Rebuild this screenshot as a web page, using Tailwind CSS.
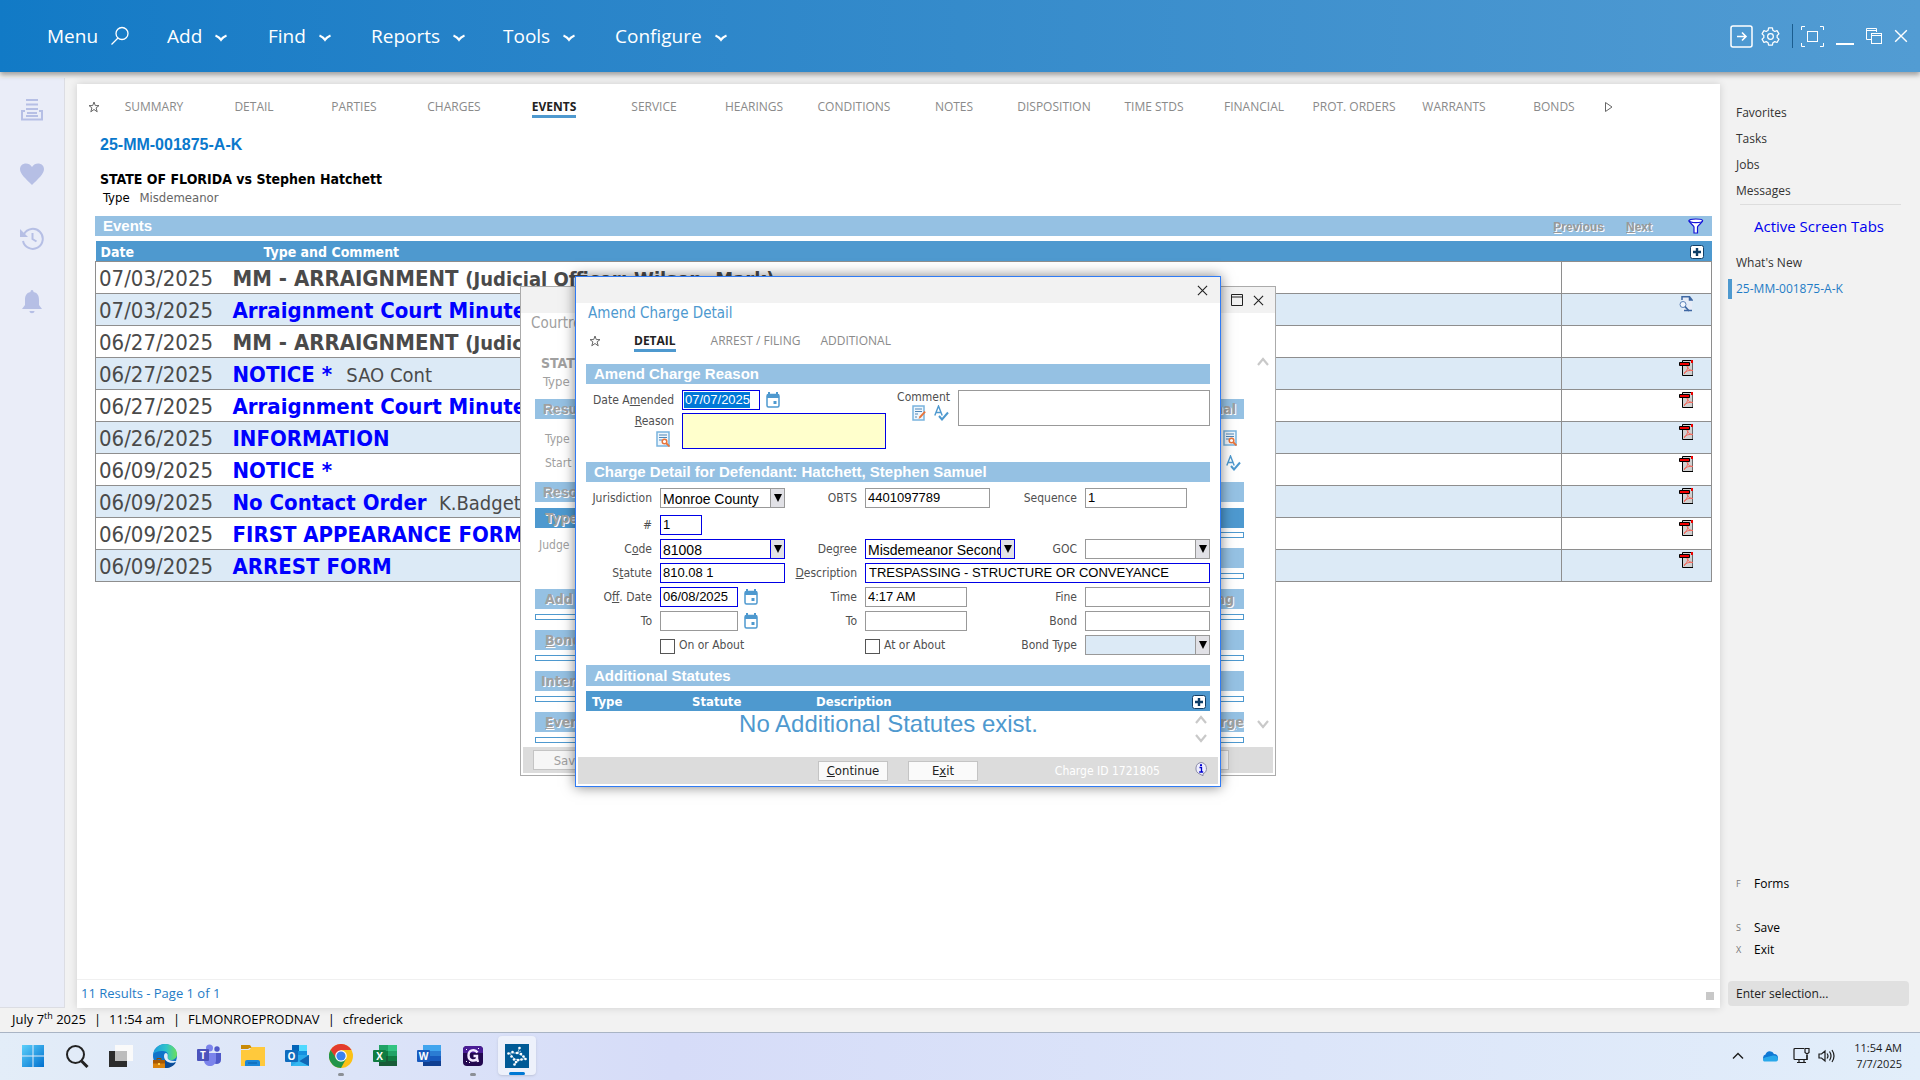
<!DOCTYPE html>
<html lang="en">
<head>
    <meta charset="UTF-8">
    <meta name="viewport" content="width=device-width, initial-scale=1.0">
    <title>25-MM-001875-A-K - Events</title>
    <script src="https://cdn.jsdelivr.net/npm/@tailwindcss/browser@4"></script>
</head>
<body class="h-screen flex flex-col overflow-hidden bg-[#f2f2f2] text-black font-['Open_Sans',sans-serif]">

    <!-- icon sprites -->
    <svg class="hidden" xmlns="http://www.w3.org/2000/svg">
        <symbol id="i-chev" viewBox="0 0 14 8"><path d="M1.5 1.5Q5 3 7 6Q9 3 12.500 1.500" fill="none" stroke="currentColor" stroke-width="2"/></symbol>
        <symbol id="i-star" viewBox="0 0 12 12"><path d="M6 1l1.300 3.600H11L8.100 6.900 9.200 10.800 6 8.500 2.800 10.800 3.900 6.900 1 4.600H4.700z" fill="none" stroke="currentColor"/></symbol>
        <symbol id="i-x" viewBox="0 0 12 12"><path d="M1 1l10 10M11 1L1 11" fill="none" stroke="currentColor" stroke-width="1.2"/></symbol>
        <symbol id="i-up" viewBox="0 0 12 10"><path d="M1 8l5-6 5 6" fill="none" stroke="currentColor" stroke-width="2.200"/></symbol>
        <symbol id="i-down" viewBox="0 0 12 10"><path d="M1 2l5 6 5-6" fill="none" stroke="currentColor" stroke-width="2.200"/></symbol>
        <symbol id="i-plus" viewBox="0 0 14 14"><rect x=".5" y=".5" width="13" height="13" rx="2" fill="#fff" stroke="#123f66"/><path d="M7 3v8M3 7h8" stroke="#0d3d66" stroke-width="2.400"/></symbol>
        <symbol id="i-cal" viewBox="0 0 14 16"><path d="M3 0v3M11 0v3" stroke="#4e99cf" stroke-width="2"/><rect x="1" y="2.500" width="12" height="12.500" rx="1.500" fill="#fff" stroke="#4e99cf" stroke-width="1.500"/><path d="M1 2.500h12V6H1z" fill="#4e99cf"/><path d="M7.500 9h3v3h-3z" fill="#4e99cf"/></symbol>
        <symbol id="i-lookup" viewBox="0 0 14 16"><path d="M1 1h12v14H1z" fill="#eef6fc" stroke="#7ab4de" stroke-width="1.500"/><path d="M3 4h8M3 6.500h8M3 9h3" stroke="#4e86b8"/><circle cx="8.500" cy="10.500" r="2.300" fill="#fff" stroke="#e8743b" stroke-width="1.500"/><path d="M10 12l3.500 3.500" stroke="#e8743b" stroke-width="1.800"/></symbol>
        <symbol id="i-note" viewBox="0 0 14 16"><path d="M1 1h11v14H1z" fill="#eef6fc" stroke="#7ab4de" stroke-width="1.500"/><path d="M3 4h7M3 6.500h7M3 9h3M3 12h2" stroke="#4e86b8"/><path d="M6.500 14l1-2.800L12.500 6l1.300 1.300-5 5.400z" fill="#e8743b"/></symbol>
        <symbol id="i-spell" viewBox="0 0 15 16"><path d="M.8 10.500L4.500 1l3.700 9.500M2 7.500h5" fill="none" stroke="#4e99cf" stroke-width="1.400"/><path d="M5 11l3 3.500 6-7" fill="none" stroke="#4e99cf" stroke-width="2"/></symbol>
        <symbol id="i-pdf" viewBox="0 0 14 16"><path d="M3.500 15.500V.5H14v15z" fill="#d0d0d0" stroke="#000"/><path d="M12 0h2v3h-2z" fill="#e00"/><path d="M5 14c2-2 4-5 4-8 0-1.500-1.500-1-1 .5 1 2.500 3 4 6 4M5 13c2-2 5-3 9-2.500" fill="none" stroke="#f4695e"/><path d="M.5 2.500h10v3H.5z" fill="#f00000" stroke="#000"/></symbol>
        <symbol id="i-view" viewBox="0 0 14 16"><path d="M3 .7h7l3 3v11.600H3z" fill="#e6ecf7"/><path d="M3 4V.7h7.500L13 4h-2.500V1M5 14.500h8" fill="none" stroke="#3f68a3" stroke-width="1.500"/><circle cx="4" cy="8.500" r="3" fill="#f2f7ff" stroke="#5d82b8"/><path d="M6 10.500l4 4.500" stroke="#3f68a3" stroke-width="1.800"/></symbol>
    </svg>

    <!-- top menu -->
    <header class="h-[72px] shrink-0 relative z-10 flex items-center pl-[47px] pr-3 text-white text-[19px] bg-linear-to-r from-[#117ac6] via-[#358bcb] to-[#529cd3] shadow-[0_3px_5px_rgba(0,0,0,0.35)]">
        <nav class="flex items-center">
            <button class="flex items-center w-[120px] gap-3">Menu
                <svg class="w-5 h-5" viewBox="0 0 20 20" fill="none" stroke="currentColor" stroke-width="1.3"><circle cx="12" cy="7.500" r="6"/><path d="M8 12L1.500 18.500"/></svg>
            </button>
            <button class="flex items-center w-[101px] gap-3">Add <svg class="w-3.5 h-2 mt-1"><use href="#i-chev"/></svg></button>
            <button class="flex items-center w-[103px] gap-3">Find <svg class="w-3.5 h-2 mt-1"><use href="#i-chev"/></svg></button>
            <button class="flex items-center w-[132px] gap-3">Reports <svg class="w-3.5 h-2 mt-1"><use href="#i-chev"/></svg></button>
            <button class="flex items-center w-[112px] gap-3">Tools <svg class="w-3.5 h-2 mt-1"><use href="#i-chev"/></svg></button>
            <button class="flex items-center gap-3">Configure <svg class="w-3.5 h-2 mt-1"><use href="#i-chev"/></svg></button>
        </nav>
        <div class="ml-auto flex items-center">
            <button aria-label="Go to"><svg class="w-[23px] h-[23px]" viewBox="0 0 23 23" fill="none" stroke="currentColor"><rect x="1" y="1" width="21" height="21" rx="2" stroke-width="1.5"/><path d="M7 11.500h9M12 7.500l4 4-4 4" stroke-width="1.600"/></svg></button>
            <button aria-label="Settings" class="ml-2"><svg class="w-[19px] h-[19px]" viewBox="0 0 20 20" fill="none" stroke="currentColor" stroke-width="1.300"><circle cx="10" cy="10" r="3"/><path d="M8 1h4l.5 2.500 2 1.200 2.400-.9 2 3.400-1.900 1.700v2.300l1.900 1.600-2 3.500-2.400-.9-2 1.200L12 19H8l-.5-2.400-2-1.200-2.400.9-2-3.500 1.900-1.600V8.900L1.100 7.200l2-3.400 2.400.9 2-1.200z" stroke-linejoin="round"/></svg></button>
            <span class="w-px h-6 bg-[#1b5d8f] ml-3"></span>
            <button aria-label="Full screen" class="ml-2"><svg class="w-[23px] h-[21px]" viewBox="0 0 23 21" fill="none" stroke="currentColor"><path d="M4 .5H.5V4M19 .5h3.500V4M4 20.500H.5V17M19 20.500h3.500V17"/><rect x="6.500" y="5.500" width="10" height="10"/></svg></button>
            <button aria-label="Minimize" class="ml-3 mt-4"><svg class="w-[18px] h-0.5" viewBox="0 0 18 2"><path d="M0 1h18" stroke="#fff" stroke-width="2"/></svg></button>
            <button aria-label="Restore" class="ml-3"><svg class="w-4 h-[18px]" viewBox="0 0 16 18" fill="none" stroke="currentColor"><path d="M5 12.500H.5V1.500h10V5M.5 3.500h10"/><rect x="5.500" y="6.500" width="10" height="10"/><path d="M5.500 8.500h10"/></svg></button>
            <button aria-label="Close" class="ml-3"><svg class="w-3.5 h-3.5"><use href="#i-x"/></svg></button>
        </div>
    </header>

    <div class="flex-1 min-h-0 flex">
        <!-- left icon rail -->
        <aside class="w-[65px] mt-1.5 shrink-0 flex flex-col items-center gap-10 pt-5 bg-[#eaedf8] border-r border-b border-[#dcdde3] text-[#b6bfe5]">
            <button aria-label="Stack"><svg class="w-6 h-6" viewBox="0 0 24 24" fill="none" stroke="currentColor" stroke-width="2"><path d="M6 2h12M6 6.500h12M6 11h12M7 15h10"/><path d="M5 13H2v8.500h20V13h-3M6 18h12"/></svg></button>
            <button aria-label="Favorites"><svg class="w-6 h-6" viewBox="0 0 24 24" fill="currentColor"><path d="M12 23C6 17 0 12 0 7c0-6 8.500-8 12-2 3.500-6 12-4 12 2 0 5-6 10-12 16z"/></svg></button>
            <button aria-label="History"><svg class="w-6 h-6" viewBox="0 0 24 24" fill="none" stroke="currentColor" stroke-width="2"><path d="M4 8a10 10 0 1 1-1 7M12.500 7v6l4 2.500"/><path d="M0 3v8h8z" fill="currentColor" stroke="none"/></svg></button>
            <button aria-label="Alerts"><svg class="w-6 h-6" viewBox="0 0 24 24" fill="currentColor"><path d="M12 0c1.200 0 1.500 1 1.500 2C18 3 19 6 19 10v5l3 4H2l3-4v-5c0-4 1-7 5.500-8 0-1 .3-2 1.500-2zM9.500 21h5c0 3-5 3-5 0z"/></svg></button>
        </aside>

        <!-- case screen -->
        <main class="flex-1 min-w-0 mt-3 ml-3 flex flex-col bg-white shadow-[0_0_8px_rgba(0,0,0,0.15)]">
            <nav class="flex items-center h-[46px] pl-[11px] text-xs text-[#8a8a8a]">
                <svg class="w-3 h-3 mr-1 text-[#666]"><use href="#i-star"/></svg>
                <a href="#" class="w-[100px] text-center whitespace-nowrap">SUMMARY</a>
                <a href="#" class="w-[100px] text-center whitespace-nowrap">DETAIL</a>
                <a href="#" class="w-[100px] text-center whitespace-nowrap">PARTIES</a>
                <a href="#" class="w-[100px] text-center whitespace-nowrap">CHARGES</a>
                <a href="#" class="w-[100px] text-center whitespace-nowrap font-bold text-[#222]"><span class="inline-block border-b-3 border-[#4e99cf] mt-[3px]">EVENTS</span></a>
                <a href="#" class="w-[100px] text-center whitespace-nowrap">SERVICE</a>
                <a href="#" class="w-[100px] text-center whitespace-nowrap">HEARINGS</a>
                <a href="#" class="w-[100px] text-center whitespace-nowrap">CONDITIONS</a>
                <a href="#" class="w-[100px] text-center whitespace-nowrap">NOTES</a>
                <a href="#" class="w-[100px] text-center whitespace-nowrap">DISPOSITION</a>
                <a href="#" class="w-[100px] text-center whitespace-nowrap">TIME STDS</a>
                <a href="#" class="w-[100px] text-center whitespace-nowrap">FINANCIAL</a>
                <a href="#" class="w-[100px] text-center whitespace-nowrap">PROT. ORDERS</a>
                <a href="#" class="w-[100px] text-center whitespace-nowrap">WARRANTS</a>
                <a href="#" class="w-[100px] text-center whitespace-nowrap">BONDS</a>
                <button aria-label="More tabs"><svg class="w-2.5 h-3" viewBox="0 0 10 12"><path d="M1.500 1.500L8 6l-6.500 4.500z" fill="none" stroke="#666"/></svg></button>
            </nav>

            <div class="pl-[18px] pr-2 font-['DejaVu_Sans_Condensed','DejaVu_Sans',sans-serif]">
                <h1 class="mt-[5px] ml-[5px] text-base leading-5 font-bold text-[#0a78cc] font-['Liberation_Sans',sans-serif]">25-MM-001875-A-K</h1>
                <div class="mt-[15px] ml-[5px] text-sm leading-[18px] font-bold">STATE OF FLORIDA vs Stephen Hatchett</div>
                <div class="mt-px ml-2 text-[13px] leading-[18px]">Type <span class="ml-1.5 text-[#666]">Misdemeanor</span></div>

                <div class="mt-[9px] h-5 flex items-center pl-2 pr-2 bg-[#95c1e3] text-white font-bold text-[15px] font-['Liberation_Sans',sans-serif]">
                    <h2 class="leading-5">Events</h2>
                    <button class="ml-auto mt-0.5 mr-[22px] text-xs text-[#999] [text-shadow:1px_1px_0_#fff]"><u>P</u>revious</button>
                    <button class="mt-0.5 mr-9 text-xs text-[#999] [text-shadow:1px_1px_0_#fff]"><u>N</u>ext</button>
                    <button aria-label="Filter"><svg class="w-4 h-4" viewBox="0 0 16 16" fill="#fff" stroke="#1414d8" stroke-width="1.200"><path d="M1 3c0 1 5 5 5 6v6h3.500V9c0-1 5-5 5-6z"/><ellipse cx="7.800" cy="2.800" rx="6.800" ry="1.800"/></svg></button>
                </div>

                <table class="mt-[5px] w-full table-fixed border-collapse text-[#4a4a4a] text-[22px] leading-7">
                    <colgroup><col class="w-[134px]"><col><col class="w-[150px]"></colgroup>
                    <thead>
                        <tr class="h-5 bg-[#4e99cf] text-white text-sm leading-[18px] text-left">
                            <th class="pt-0.5 pl-[5px]">Date</th>
                            <th class="pt-0.5 pl-[34px]">Type and Comment</th>
                            <th class="pt-0.5 pr-2"><button aria-label="Add event" class="block ml-auto"><svg class="w-3.5 h-3.5"><use href="#i-plus"/></svg></button></th>
                        </tr>
                    </thead>
                    <tbody class="border border-[#8e8e8e] whitespace-nowrap [&_td]:pt-0.5">
                        <tr class="h-8 border-t border-[#8e8e8e]"><td class="pl-[3px]">07/03/2025</td><td class="pl-[3px] font-bold">MM - ARRAIGNMENT <span class="text-xl">(Judicial Officer: Wilson, Mark)</span></td><td class="border-l border-[#8e8e8e]"></td></tr>
                        <tr class="h-8 border-t border-[#8e8e8e] bg-[#dceaf6]"><td class="pl-[3px]">07/03/2025</td><td class="pl-[3px] font-bold text-[#00f]">Arraignment Court Minutes</td><td class="border-l border-[#8e8e8e] align-top"><svg class="w-3.5 h-4 ml-auto mr-[18px]"><use href="#i-view"/></svg></td></tr>
                        <tr class="h-8 border-t border-[#8e8e8e]"><td class="pl-[3px]">06/27/2025</td><td class="pl-[3px] font-bold">MM - ARRAIGNMENT <span class="text-xl">(Judicial Officer)</span></td><td class="border-l border-[#8e8e8e]"></td></tr>
                        <tr class="h-8 border-t border-[#8e8e8e] bg-[#dceaf6]"><td class="pl-[3px]">06/27/2025</td><td class="pl-[3px]"><b class="text-[#00f]">NOTICE *</b> <span class="ml-2 text-xl">SAO Cont</span></td><td class="border-l border-[#8e8e8e] align-top"><svg class="w-3.5 h-4 ml-auto mr-[18px]"><use href="#i-pdf"/></svg></td></tr>
                        <tr class="h-8 border-t border-[#8e8e8e]"><td class="pl-[3px]">06/27/2025</td><td class="pl-[3px] font-bold text-[#00f]">Arraignment Court Minutes</td><td class="border-l border-[#8e8e8e] align-top"><svg class="w-3.5 h-4 ml-auto mr-[18px]"><use href="#i-pdf"/></svg></td></tr>
                        <tr class="h-8 border-t border-[#8e8e8e] bg-[#dceaf6]"><td class="pl-[3px]">06/26/2025</td><td class="pl-[3px] font-bold text-[#00f]">INFORMATION</td><td class="border-l border-[#8e8e8e] align-top"><svg class="w-3.5 h-4 ml-auto mr-[18px]"><use href="#i-pdf"/></svg></td></tr>
                        <tr class="h-8 border-t border-[#8e8e8e]"><td class="pl-[3px]">06/09/2025</td><td class="pl-[3px] font-bold text-[#00f]">NOTICE *</td><td class="border-l border-[#8e8e8e] align-top"><svg class="w-3.5 h-4 ml-auto mr-[18px]"><use href="#i-pdf"/></svg></td></tr>
                        <tr class="h-8 border-t border-[#8e8e8e] bg-[#dceaf6]"><td class="pl-[3px]">06/09/2025</td><td class="pl-[3px]"><b class="text-[#00f]">No Contact Order</b> <span class="ml-1.5 text-xl">K.Badgett</span></td><td class="border-l border-[#8e8e8e] align-top"><svg class="w-3.5 h-4 ml-auto mr-[18px]"><use href="#i-pdf"/></svg></td></tr>
                        <tr class="h-8 border-t border-[#8e8e8e]"><td class="pl-[3px]">06/09/2025</td><td class="pl-[3px] font-bold text-[#00f]">FIRST APPEARANCE FORM</td><td class="border-l border-[#8e8e8e] align-top"><svg class="w-3.5 h-4 ml-auto mr-[18px]"><use href="#i-pdf"/></svg></td></tr>
                        <tr class="h-8 border-t border-[#8e8e8e] bg-[#dceaf6]"><td class="pl-[3px]">06/09/2025</td><td class="pl-[3px] font-bold text-[#00f]">ARREST FORM</td><td class="border-l border-[#8e8e8e] align-top"><svg class="w-3.5 h-4 ml-auto mr-[18px]"><use href="#i-pdf"/></svg></td></tr>
                    </tbody>
                </table>
            </div>

            <footer class="mt-auto h-[29px] flex items-center pl-1 pr-1.5 border-t border-[#f0f0f0] text-[13px] text-[#1f7cc6]">
                11 Results - Page 1 of 1
                <span class="ml-auto mt-1 w-2 h-2 bg-[#c8c8c8]"></span>
            </footer>
        </main>

        <!-- right navigation -->
        <aside class="w-[200px] shrink-0 flex flex-col pt-7 pl-2 pr-[11px] pb-0.5 text-xs text-[#333]">
            <nav class="flex flex-col">
                <a href="#" class="pl-2 leading-[26px]">Favorites</a>
                <a href="#" class="pl-2 leading-[26px]">Tasks</a>
                <a href="#" class="pl-2 leading-[26px]">Jobs</a>
                <a href="#" class="pl-2 leading-[26px]">Messages</a>
                <hr class="ml-3 mr-2 border-[#ddd]">
                <h2 class="pl-[26px] py-[7px] text-[15px] leading-7 text-[#00e]">Active Screen Tabs</h2>
                <a href="#" class="mt-[3px] pl-2 leading-[26px]">What's New</a>
                <a href="#" class="mt-[3px] pl-1 leading-5 border-l-4 border-[#4e99cf] text-[#1f7cc6]">25-MM-001875-A-K</a>
            </nav>
            <div class="mt-auto flex flex-col text-black">
                <button class="flex items-center h-[22px] pl-2 mb-[22px]"><span class="w-[18px] text-left text-[9px] text-[#777]">F</span>Forms</button>
                <button class="flex items-center h-[22px] pl-2"><span class="w-[18px] text-left text-[9px] text-[#777]">S</span>Save</button>
                <button class="flex items-center h-[22px] pl-2"><span class="w-[18px] text-left text-[9px] text-[#777]">X</span>Exit</button>
                <input type="text" aria-label="Enter selection" placeholder="Enter selection..." class="mt-5 h-[25px] w-full rounded bg-[#e0e0e0] px-2 text-xs placeholder:text-[#222]">
            </div>
        </aside>
    </div>

    <!-- status line -->
    <div class="h-6 shrink-0 flex items-center pl-3 pb-0.5 gap-2 text-[13px] leading-none">
        <span>July 7<sup class="text-[9px]">th</sup> 2025</span><span>|</span><span>11:54 am</span><span>|</span><span>FLMONROEPRODNAV</span><span>|</span><span>cfrederick</span>
    </div>

    <!-- taskbar -->
    <div class="h-12 shrink-0 flex items-center pl-[11px] pr-[18px] pb-0.5 border-t border-[#a9b4c4] bg-linear-to-r from-[#e3edf8] via-[#d6dcf8] via-35% to-[#e2eefa]">
        <button aria-label="Start" class="w-11 h-11 flex justify-center items-center"><svg class="w-6 h-6" viewBox="0 0 24 24"><defs><linearGradient id="gw" x1="0" y1="0" x2="1" y2="1"><stop offset="0" stop-color="#5cd0fb"/><stop offset="1" stop-color="#0070cf"/></linearGradient></defs><path d="M1 1h10.500v10.500H1zM12.500 1H23v10.500H12.500zM1 12.500h10.500V23H1zM12.500 12.500H23V23H12.500z" fill="url(#gw)"/></svg></button>
        <button aria-label="Search" class="w-11 h-11 flex justify-center items-center"><svg class="w-6 h-6" viewBox="0 0 24 24" fill="none" stroke="#222"><circle cx="10.500" cy="10.500" r="8.500" stroke-width="2"/><path d="M16.500 17l6 6" stroke-width="3"/></svg></button>
        <button aria-label="Task view" class="w-11 h-11 flex justify-center items-center"><svg class="w-6 h-6" viewBox="0 0 24 24"><path d="M0 7h18v16H0z" fill="#2c2c2c"/><path d="M6 1h18v16H6z" fill="#fafafa"/><path d="M6 7h12v10H6z" fill="#bdbdbd"/></svg></button>
        <button aria-label="Edge" class="w-11 h-11 flex justify-center items-center"><svg class="w-6 h-6" viewBox="0 0 24 24"><defs><linearGradient id="ge"><stop offset="0" stop-color="#1a9be0"/><stop offset=".55" stop-color="#2fc3c9"/><stop offset="1" stop-color="#6be05a"/></linearGradient></defs><circle cx="12" cy="12" r="12" fill="#1173c9"/><path d="M0 11C1 4 6 0 12 0c7 0 12 5 12 10 0 4-3 6-6 6-2 0-4-1-3-3 1-3-1-6-5-6-5 0-9 1-10 4z" fill="url(#ge)"/><path d="M24 17c-5 4-13 1-13-5 0-2 1-3 2-3 3 1 1 4 2 6 2 2 6 2 9 2z" fill="#e3edf8"/><path d="M12 16c3 4 8 4 11 2-2 4-6 6-11 6z" fill="#0b4a94"/><path d="M0 16h12v8H0z" fill="#d9820c"/><path d="M0 16h12v3.500H0z" fill="#a85a04"/><path d="M5 19h2v2H5z" fill="#ffd34d"/><path d="M4 16v-1.500h4V16" fill="none" stroke="#8c4a00"/></svg></button>
        <button aria-label="Teams" class="w-11 h-11 flex justify-center items-center"><svg class="w-6 h-6" viewBox="0 0 24 24"><circle cx="12.500" cy="4" r="3.500" fill="#7b83eb"/><circle cx="20" cy="5" r="2.700" fill="#5059c9"/><path d="M17 9h7v7c0 4-5 5-7 3z" fill="#5059c9"/><path d="M7 9h12v7c0 8-12 8-12 0z" fill="#7b83eb"/><rect x="0" y="5" width="12" height="12" rx="1" fill="#4b53bc"/><text x="6" y="14.500" font-size="10" font-weight="700" text-anchor="middle" fill="#fff">T</text></svg></button>
        <button aria-label="File Explorer" class="w-11 h-11 flex justify-center items-center"><svg class="w-6 h-6" viewBox="0 0 24 24"><path d="M0 1h9l2 3H0z" fill="#d99800"/><path d="M0 6h8l3-3h13v19H0z" fill="#ffc93c"/><path d="M0 5V2q0-1 1-1h7l2 2-3 2z" fill="#c98a06"/><path d="M4 22v-4q0-2 2-2h11q2 0 2 2v4z" fill="#1a86d8"/><path d="M7 19h9" stroke="#0b5ea8"/></svg></button>
        <button aria-label="Outlook" class="w-11 h-11 flex justify-center items-center"><svg class="w-6 h-6" viewBox="0 0 24 24"><path d="M7 1h15v11H7z" fill="#1490df"/><path d="M14 1h8v6h-8z" fill="#50d9ff"/><path d="M7 1h7v6H7z" fill="#0364b8"/><path d="M6 11h18v11H6z" fill="#28a8ea"/><path d="M24 11L13 18l11 4z" fill="#1066b5"/><path d="M6 22l8-5 10 5z" fill="#35b8f1"/><rect y="6" width="13" height="12" rx="1" fill="#0f6cbd"/><text x="6.500" y="15.500" font-size="10" font-weight="700" text-anchor="middle" fill="#fff">O</text></svg></button>
        <button aria-label="Chrome" class="relative w-11 h-11 flex justify-center items-center"><svg class="w-6 h-6" viewBox="0 0 24 24"><circle cx="12" cy="12" r="12" fill="#fbc116"/><path d="M1.600 6A12 12 0 0 1 22.400 6H12L7 15z" fill="#e33b2e"/><path d="M1.600 6A12 12 0 0 0 12 24l5-9-10-1z" fill="#21954a"/><circle cx="12" cy="12" r="5.800" fill="#fff"/><circle cx="12" cy="12" r="4.600" fill="#3b82f0"/></svg><span class="absolute bottom-0.5 w-1.5 h-[3px] rounded-full bg-[#8b8f96]"></span></button>
        <button aria-label="Excel" class="w-11 h-11 flex justify-center items-center"><svg class="w-6 h-6" viewBox="0 0 24 24"><path d="M6 1h9v6H6z" fill="#21a366"/><path d="M15 1h9v6h-9z" fill="#33c481"/><path d="M6 7h9v5H6z" fill="#107c41"/><path d="M15 7h9v5h-9z" fill="#21a366"/><path d="M6 12h18v10H6z" fill="#185c37"/><path d="M15 12h9v5h-9z" fill="#107c41"/><rect y="6" width="13" height="12" rx="1" fill="#107c41"/><text x="6.500" y="15.500" font-size="10" font-weight="700" text-anchor="middle" fill="#fff">X</text></svg></button>
        <button aria-label="Word" class="w-11 h-11 flex justify-center items-center"><svg class="w-6 h-6" viewBox="0 0 24 24"><path d="M6 1h18v6H6z" fill="#41a5ee"/><path d="M6 7h18v5H6z" fill="#2b7cd3"/><path d="M6 12h18v5H6z" fill="#185abd"/><path d="M6 17h18v5H6z" fill="#103f91"/><rect y="6" width="13" height="12" rx="1" fill="#185abd"/><text x="6.500" y="15.500" font-size="10" font-weight="700" text-anchor="middle" fill="#fff">W</text></svg></button>
        <button aria-label="G app" class="relative w-11 h-11 flex justify-center items-center"><svg class="w-6 h-6" viewBox="0 0 24 24"><rect x="2" y="2" width="20" height="20" rx="4" fill="#23084f"/><path d="M2 6q0-4 4-4h12q4 0 4 4v3H2z" fill="#4a1d96"/><path d="M16.500 8.500C14 4.500 7.500 6 7.500 11.500c0 5 5 6.500 8.500 3.500v-3h-3.500M16 14.500l1 3.500" fill="none" stroke="#f3eaff" stroke-width="2.400"/><path d="M5 5h1v1H5zM17 4h1v1h-1zM5 17h1v1H5zM8 18h1v1H8z" fill="#fff"/></svg><span class="absolute bottom-0.5 w-1.5 h-[3px] rounded-full bg-[#8b8f96]"></span></button>
        <button aria-label="Case manager" class="relative w-[38px] h-[39px] ml-[3px] flex justify-center items-center rounded bg-[#edf1fb] shadow-sm"><svg class="w-6 h-6" viewBox="0 0 24 24"><path d="M0 0h24v24H0z" fill="#005a96"/><path d="M14.500 4l-2 5-8 0M4.500 9l2.500 3 2.500 3L14.500 16l-5 4.500M12.500 9l4 2.500 4 3-6 1.500M16 7l-3.500 2" fill="none" stroke="#fff" stroke-width=".6"/><g fill="#fff"><circle cx="14.500" cy="4" r="1.300"/><circle cx="3.500" cy="9.500" r="1.300"/><circle cx="7.500" cy="8" r="1.300"/><circle cx="12" cy="9" r="1.300"/><circle cx="16" cy="10" r="1.300"/><circle cx="18.500" cy="12.500" r="1.300"/><circle cx="20.500" cy="15" r="1.300"/><circle cx="6.500" cy="12.500" r="1.300"/><circle cx="9" cy="15.500" r="1.300"/><circle cx="13" cy="16" r="1.300"/><circle cx="16.500" cy="15.500" r="1.300"/><circle cx="9.500" cy="20.500" r="1.300"/><circle cx="11" cy="18" r="1.300"/></g></svg><span class="absolute bottom-0 w-4 h-[3px] rounded-full bg-[#0078d4]"></span></button>
        <div class="ml-auto flex items-center text-[#1b1b1b]">
            <button aria-label="Show hidden icons"><svg class="w-3 h-3" viewBox="0 0 12 12" fill="none" stroke="currentColor" stroke-width="1.400"><path d="M1 8.500l5-5 5 5"/></svg></button>
            <button aria-label="OneDrive" class="ml-[18px]"><svg class="w-4 h-3" viewBox="0 0 16 12"><path d="M3 11a3.500 3.500 0 0 1 .5-6.500A4.500 4.500 0 0 1 12 4c3 0 4 2 4 4s-1 3-3 3z" fill="#0f78d4"/><path d="M2 11.500C0 10 1 7.500 5 7l6-1.500c3-.5 5 1.500 5 3.500s-1 2.500-3 2.500z" fill="#28a8ea"/></svg></button>
            <button aria-label="Network" class="ml-[15px]"><svg class="w-[17px] h-[17px]" viewBox="0 0 17 17" fill="none" stroke="currentColor" stroke-width="1.200"><path d="M11 1.500H2q-1 0-1 1v9q0 1 1 1h12V8M4 15.500h9M6 12.500v3M11 12.500v3"/><path d="M12 1.500h4v4l-2 1.500-2-1.500zM14 7v6"/></svg></button>
            <button aria-label="Volume" class="ml-2"><svg class="w-[17px] h-4" viewBox="0 0 17 16" fill="none" stroke="currentColor" stroke-width="1.200"><path d="M1 6h2.500L7 3v10L3.500 10H1zM9 5.500q2 2.500 0 5M11.500 3.500q3 4.500 0 9M14 2q4 6 0 12"/></svg></button>
            <div class="ml-3.5 w-[53px] text-[11px] leading-4 text-right whitespace-nowrap">11:54 AM<br>7/7/2025</div>
        </div>
    </div>

    <!-- result dialog, inactive behind the charge dialog -->
    <section class="absolute left-[520px] top-[286px] z-20 w-[756px] flex flex-col bg-white border border-[#ababab] p-0.5 pt-0 text-[#a0a0a0] font-['DejaVu_Sans_Condensed','DejaVu_Sans',sans-serif]">
        <div class="h-[26px] -mx-0.5 flex justify-end items-center gap-2.5 pr-[11px] bg-[#f2f2f2] text-[#222]">
            <button aria-label="Maximize"><svg class="w-3 h-3" viewBox="0 0 12 12" fill="none" stroke="currentColor"><path d="M.5.5h11v11H.5zM.5 3h11"/></svg></button>
            <button aria-label="Close dialog"><svg class="w-[11px] h-[11px]"><use href="#i-x"/></svg></button>
        </div>
        <div class="h-[434px] flex justify-between pl-3 pr-1 text-xs">
            <div class="w-[200px] flex flex-col">
                <div class="h-5 text-[15px] leading-5 -ml-1">Courtroom</div>
                <div class="mt-5 ml-1.5 text-sm leading-5 font-bold">STATE OF FLORIDA</div>
                <div class="ml-2 text-[13px] leading-[18px]">Type</div>
                <div class="mt-2 h-5 pl-2 bg-[#95c1e3] text-sm leading-5 font-bold [text-shadow:1px_1px_0_#fff] font-['Liberation_Sans',sans-serif]">Result</div>
                <div class="mt-2.5 ml-2.5 leading-5">Type</div>
                <div class="mt-1 ml-2.5 leading-5">Start</div>
                <div class="mt-[9px] h-5 pl-2 bg-[#95c1e3] text-sm leading-5 font-bold [text-shadow:1px_1px_0_#fff] font-['Liberation_Sans',sans-serif]">Resource</div>
                <div class="mt-1.5 h-5 pl-2.5 bg-[#4e99cf] text-sm leading-5 font-bold [text-shadow:1px_1px_0_#fff]">Type</div>
                <div class="mt-[7px] ml-1 leading-5">Judge</div>
                <div class="mt-[34px] h-5 pl-2.5 bg-[#95c1e3] text-sm leading-5 font-bold [text-shadow:1px_1px_0_#fff]">Add</div>
                <div class="mt-[5px] h-1.5 border border-[#4e99cf]"></div>
                <div class="mt-2.5 h-5 pl-2.5 bg-[#95c1e3] text-sm leading-5 font-bold [text-shadow:1px_1px_0_#fff]"><u>B</u>onds</div>
                <div class="mt-[5px] h-1.5 border border-[#4e99cf]"></div>
                <div class="mt-2.5 h-5 pl-1.5 bg-[#95c1e3] text-sm leading-5 font-bold [text-shadow:1px_1px_0_#fff]">Interim</div>
                <div class="mt-[5px] h-1.5 border border-[#4e99cf]"></div>
                <div class="mt-2.5 h-5 pl-2.5 bg-[#95c1e3] text-sm leading-5 font-bold [text-shadow:1px_1px_0_#fff]"><u>E</u>vents</div>
                <div class="mt-[5px] h-1.5 border border-[#4e99cf]"></div>
            </div>
            <div class="w-[200px] flex">
                <div class="flex-1 flex flex-col pt-[86px] text-right">
                    <div class="h-5 pr-2 bg-[#95c1e3] text-sm leading-5 font-bold [text-shadow:1px_1px_0_#fff]">Additional</div>
                    <svg class="w-3.5 h-4 mt-[11px] ml-auto mr-[7px]"><use href="#i-lookup"/></svg>
                    <svg class="w-[15px] h-4 mt-[9px] ml-auto mr-[3px]"><use href="#i-spell"/></svg>
                    <div class="mt-[11px] h-5 bg-[#95c1e3]"></div>
                    <div class="mt-1.5 h-5 bg-[#4e99cf]"></div>
                    <div class="mt-1 h-1.5 border border-[#4e99cf]"></div>
                    <div class="mt-2.5 h-5 bg-[#95c1e3]"></div>
                    <div class="mt-[5px] h-1.5 border border-[#4e99cf]"></div>
                    <div class="mt-2.5 h-5 pr-2.5 bg-[#95c1e3] text-sm leading-5 font-bold [text-shadow:1px_1px_0_#fff]">Hearing</div>
                    <div class="mt-[5px] h-1.5 border border-[#4e99cf]"></div>
                    <div class="mt-2.5 h-5 bg-[#95c1e3]"></div>
                    <div class="mt-[5px] h-1.5 border border-[#4e99cf]"></div>
                    <div class="mt-2.5 h-5 bg-[#95c1e3]"></div>
                    <div class="mt-[5px] h-1.5 border border-[#4e99cf]"></div>
                    <div class="mt-2.5 h-5 bg-[#95c1e3] text-sm leading-5 font-bold [text-shadow:1px_1px_0_#fff]">Char<u>g</u>e</div>
                    <div class="mt-[5px] h-1.5 border border-[#4e99cf]"></div>
                </div>
                <div class="w-[25px] flex flex-col justify-between items-end pt-11 pb-[18px] text-[#c9c9c9]">
                    <svg class="w-3 h-2.5"><use href="#i-up"/></svg>
                    <svg class="w-3 h-2.5"><use href="#i-down"/></svg>
                </div>
            </div>
        </div>
        <div class="h-[26px] flex justify-between items-center pl-2.5 pr-11 bg-[#dcdcdc] text-[13px]">
            <button class="w-[70px] h-5 border border-[#c4c4c4] bg-[#f6f6f6]">Save</button>
            <button class="w-[70px] h-5 border border-[#c4c4c4] bg-[#f6f6f6]" aria-label="Cancel"></button>
        </div>
    </section>

    <!-- amend charge dialog -->
    <section class="absolute left-[575px] top-[276px] z-30 w-[646px] h-[511px] flex flex-col bg-white border border-[#2f7bf5] p-0.5 pt-0 shadow-[0_0_12px_rgba(0,0,0,0.5)] text-xs text-[#505050] font-['DejaVu_Sans_Condensed','DejaVu_Sans',sans-serif]">
        <div class="h-[26px] shrink-0 -mx-0.5 flex justify-end items-center pr-3 bg-[#f2f2f2] text-[#222]">
            <button aria-label="Close amend dialog"><svg class="w-[11px] h-[11px]"><use href="#i-x"/></svg></button>
        </div>
        <div class="px-2">
            <h2 class="pl-0.5 text-[15px] leading-5 text-[#4e99cf]">Amend Charge Detail</h2>
            <nav class="mt-1 flex items-center h-[27px] pl-[3px] text-[#8a8a8a] font-['Open_Sans',sans-serif]">
                <svg class="w-3 h-3 text-[#666]"><use href="#i-star"/></svg>
                <a href="#" class="ml-[33px] mt-[3px] border-b-3 border-[#4e99cf] font-bold text-[#222]">DETAIL</a>
                <a href="#" class="ml-[35px]">ARREST / FILING</a>
                <a href="#" class="ml-5">ADDITIONAL</a>
            </nav>

            <h3 class="mt-2.5 h-5 pl-2 bg-[#95c1e3] text-white text-[15px] leading-5 font-bold font-['Liberation_Sans',sans-serif]">Amend Charge Reason</h3>
            <div class="mt-1.5 flex h-[62px] items-start">
                <div class="grid grid-cols-[88px_204px] gap-x-2 gap-y-[3px]">
                    <label for="amended" class="text-right leading-5">Date A<u>m</u>ended</label>
                    <div class="flex items-center gap-1.5">
                        <div class="w-[78px] h-5 border border-[#0000e6] p-px flex items-center">
                            <input id="amended" type="text" value="07/07/2025" class="w-[66px] h-4 pl-px bg-[#0078d7] text-white text-[13px] outline-none font-['Liberation_Sans',sans-serif]">
                        </div>
                        <button aria-label="Pick amended date"><svg class="w-3.5 h-4"><use href="#i-cal"/></svg></button>
                    </div>
                    <div class="flex flex-col items-end">
                        <label for="reason" class="leading-4"><u>R</u>eason</label>
                        <button aria-label="Look up reason" class="mr-1 mt-0.5"><svg class="w-3.5 h-4"><use href="#i-lookup"/></svg></button>
                    </div>
                    <textarea id="reason" class="block w-full h-9 resize-none bg-[#ffffcc] border border-[#0000e6]"></textarea>
                </div>
                <div class="w-16 flex flex-col items-end">
                    <label for="comment" class="leading-[15px]">Comment</label>
                    <div class="flex gap-2 mr-px">
                        <button aria-label="Edit comment"><svg class="w-3.5 h-4"><use href="#i-note"/></svg></button>
                        <button aria-label="Check spelling"><svg class="w-[15px] h-4"><use href="#i-spell"/></svg></button>
                    </div>
                </div>
                <textarea id="comment" class="ml-2 flex-1 h-9 resize-none bg-white border border-[#999]"></textarea>
            </div>

            <h3 class="mt-2.5 h-5 pl-2 bg-[#95c1e3] text-white text-[15px] leading-5 font-bold font-['Liberation_Sans',sans-serif]">Charge Detail for Defendant: Hatchett, Stephen Samuel</h3>
            <div class="mt-1.5 grid grid-cols-[66px_125px_64px_150px_54px_125px] grid-rows-[23px_repeat(6,20px)] gap-x-2 gap-y-1 items-start leading-5 whitespace-nowrap">
                <label for="jur" class="text-right">Jurisdiction</label>
                <div class="relative h-5 border border-[#999]">
                    <select id="jur" class="appearance-none block w-full h-full pl-0.5 pr-4 text-[14px] text-black outline-none font-['Liberation_Sans',sans-serif]"><option>Monroe County</option></select>
                    <span class="absolute right-0 top-0 w-3.5 h-full flex items-center justify-center border-l border-[#999] bg-[#e1e1e6] pointer-events-none"><svg class="w-2 h-2.5" viewBox="0 0 8 10"><path d="M0 1h8L4 9z"/></svg></span>
                </div>
                <label for="obts" class="text-right">OBTS</label>
                <input id="obts" type="text" value="4401097789" class="w-[125px] h-5 pl-0.5 border border-[#999] text-[13px] text-black font-['Liberation_Sans',sans-serif]">
                <label for="seq" class="text-right">Sequence</label>
                <input id="seq" type="text" value="1" class="w-[102px] h-5 pl-0.5 border border-[#999] text-[13px] text-black font-['Liberation_Sans',sans-serif]">

                <label for="num" class="text-right">#</label>
                <input id="num" type="text" value="1" class="col-span-5 w-[42px] h-5 pl-0.5 border border-[#0000e6] text-[13px] text-black font-['Liberation_Sans',sans-serif]">

                <label for="code" class="text-right">C<u>o</u>de</label>
                <div class="relative h-5 border border-[#0000e6]">
                    <select id="code" class="appearance-none block w-full h-full pl-0.5 pr-4 text-[14px] text-black outline-none font-['Liberation_Sans',sans-serif]"><option>81008</option></select>
                    <span class="absolute right-0 top-0 w-3.5 h-full flex items-center justify-center border-l border-[#0000e6] bg-[#e1e1e6] pointer-events-none"><svg class="w-2 h-2.5" viewBox="0 0 8 10"><path d="M0 1h8L4 9z"/></svg></span>
                </div>
                <label for="deg" class="text-right">De<u>g</u>ree</label>
                <div class="relative h-5 border border-[#0000e6]">
                    <select id="deg" class="appearance-none block w-full h-full pl-0.5 pr-3.5 text-[14px] text-black outline-none font-['Liberation_Sans',sans-serif]"><option>Misdemeanor Second Degree</option></select>
                    <span class="absolute right-0 top-0 w-3.5 h-full flex items-center justify-center border-l border-[#0000e6] bg-[#e1e1e6] pointer-events-none"><svg class="w-2 h-2.5" viewBox="0 0 8 10"><path d="M0 1h8L4 9z"/></svg></span>
                </div>
                <label for="goc" class="text-right">GOC</label>
                <div class="relative h-5 border border-[#999]">
                    <select id="goc" class="appearance-none block w-full h-full outline-none"><option></option></select>
                    <span class="absolute right-0 top-0 w-3.5 h-full flex items-center justify-center border-l border-[#999] bg-[#e1e1e6] pointer-events-none"><svg class="w-2 h-2.5" viewBox="0 0 8 10"><path d="M0 1h8L4 9z"/></svg></span>
                </div>

                <label for="stat" class="text-right">S<u>t</u>atute</label>
                <input id="stat" type="text" value="810.08 1" class="h-5 pl-0.5 border border-[#0000e6] text-[13px] text-black font-['Liberation_Sans',sans-serif]">
                <label for="desc" class="justify-self-end"><u>D</u>escription</label>
                <input id="desc" type="text" value="TRESPASSING - STRUCTURE OR CONVEYANCE" class="col-span-3 h-5 pl-[3px] border border-[#0000e6] text-[13px] text-black font-['Liberation_Sans',sans-serif]">

                <label for="odate" class="text-right">O<u>f</u>f. Date</label>
                <div class="flex items-center gap-1.5">
                    <input id="odate" type="text" value="06/08/2025" class="w-[78px] h-5 pl-0.5 border border-[#0000e6] text-[13px] text-black font-['Liberation_Sans',sans-serif]">
                    <button aria-label="Pick offense date"><svg class="w-3.5 h-4"><use href="#i-cal"/></svg></button>
                </div>
                <label for="time" class="text-right">Time</label>
                <input id="time" type="text" value="4:17 AM" class="w-[102px] h-5 pl-0.5 border border-[#999] text-[13px] text-black font-['Liberation_Sans',sans-serif]">
                <label for="fine" class="text-right">Fine</label>
                <input id="fine" type="text" class="h-5 min-w-0 border border-[#999]">

                <label for="odate2" class="text-right">To</label>
                <div class="flex items-center gap-1.5">
                    <input id="odate2" type="text" class="w-[78px] h-5 border border-[#999]">
                    <button aria-label="Pick end date"><svg class="w-3.5 h-4"><use href="#i-cal"/></svg></button>
                </div>
                <label for="time2" class="text-right">To</label>
                <input id="time2" type="text" class="w-[102px] h-5 border border-[#999]">
                <label for="bond" class="text-right">Bond</label>
                <input id="bond" type="text" class="h-5 min-w-0 border border-[#999]">

                <div class="col-start-2 flex items-center gap-1">
                    <input id="onab" type="checkbox" class="appearance-none w-[15px] h-[15px] mt-0.5 border border-[#555] bg-white">
                    <label for="onab">On or About</label>
                </div>
                <div class="col-start-4 flex items-center gap-1">
                    <input id="atab" type="checkbox" class="appearance-none w-[15px] h-[15px] mt-0.5 border border-[#555] bg-white">
                    <label for="atab">At or About</label>
                </div>
                <label for="btype" class="justify-self-end">Bond Type</label>
                <div class="relative h-5 border border-[#999] bg-[#dceaf6]">
                    <select id="btype" class="appearance-none block w-full h-full outline-none"><option></option></select>
                    <span class="absolute right-0 top-0 w-3.5 h-full flex items-center justify-center border-l border-[#999] bg-[#e1e1e6] pointer-events-none"><svg class="w-2 h-2.5" viewBox="0 0 8 10"><path d="M0 1h8L4 9z"/></svg></span>
                </div>
            </div>

            <h3 class="mt-2.5 h-[21px] pl-2 bg-[#95c1e3] text-white text-[15px] leading-[21px] font-bold font-['Liberation_Sans',sans-serif]">Additional Statutes</h3>
            <table class="mt-[5px] w-full">
                <thead>
                    <tr class="h-5 bg-[#4e99cf] text-white text-[13px] leading-[18px] text-left">
                        <th class="w-[100px] pt-0.5 pl-1.5">Type</th>
                        <th class="w-[124px] pt-0.5 pl-1.5">Statute</th>
                        <th class="pt-0.5 pl-1.5">Description</th>
                        <th class="pt-0.5 pr-1"><button aria-label="Add statute" class="block ml-auto"><svg class="w-3.5 h-3.5"><use href="#i-plus"/></svg></button></th>
                    </tr>
                </thead>
            </table>
            <div class="flex justify-between pr-[3px]">
                <p class="flex-1 pr-1 text-center text-2xl leading-[26px] text-[#4e99cf] font-['Liberation_Sans',sans-serif]">No Additional Statutes exist.</p>
                <div class="flex flex-col gap-2 pt-1 text-[#c9c9c9]">
                    <svg class="w-3 h-2.5"><use href="#i-up"/></svg>
                    <svg class="w-3 h-2.5"><use href="#i-down"/></svg>
                </div>
            </div>
        </div>
        <div class="mt-auto h-[27px] shrink-0 flex items-center pl-[240px] pr-2.5 bg-[#dcdcdc] text-[13px] text-[#222]">
            <button class="w-[70px] h-5 leading-[18px] border border-[#c4c4c4] bg-[#fafafa]"><u>C</u>ontinue</button>
            <button class="ml-5 w-[70px] h-5 leading-[18px] border border-[#c4c4c4] bg-[#fafafa]">E<u>x</u>it</button>
            <span class="ml-auto mr-[34px] text-xs text-white">Charge ID 1721805</span>
            <button aria-label="Info" class="mb-1"><svg class="w-3.5 h-3.5" viewBox="0 0 14 14"><path d="M7 .5a6 6 0 0 1 2 11.400V13.800l-3-1.700A6 6 0 0 1 7 .5z" fill="#eef" stroke="#8a8aa8"/><path d="M7 2.200v1.800" stroke="#00c" stroke-width="2"/><path d="M5.500 5.500H7.500V10M5.200 10h4" fill="none" stroke="#00c" stroke-width="1.300"/></svg></button>
        </div>
    </section>
</body>
</html>
